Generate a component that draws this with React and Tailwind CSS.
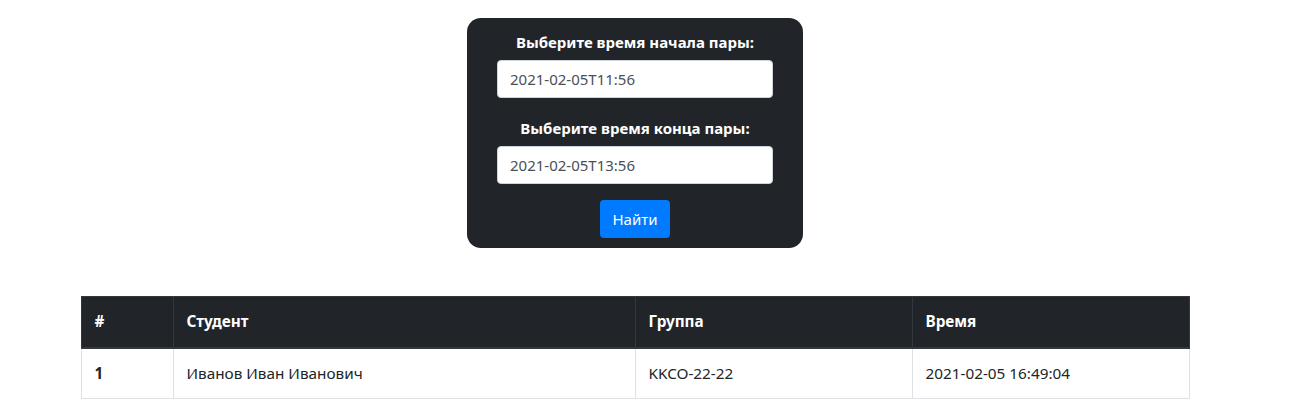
export default function App() {
  const font = { fontFamily: '"Noto Sans", "Open Sans", sans-serif' };
  return (
    <div className="w-[1270px] bg-white text-[#212529]" style={font}>
      <div className="flex justify-center pt-[18px]">
        <div className="w-[336px] h-[230px] rounded-[14px] bg-[#212529] flex flex-col items-center pt-[12px]">
          <div className="text-white font-bold text-[15px] leading-[24px] h-[30px]">Выберите время начала пары:</div>
          <div className="w-[276px] h-[38px] rounded-[4px] bg-white border border-[#ced4da] flex items-center px-[12px] text-[15px] text-[#495057]">2021-02-05T11:56</div>
          <div className="text-white font-bold text-[15px] leading-[24px] mt-[18px] h-[30px]">Выберите время конца пары:</div>
          <div className="w-[276px] h-[38px] rounded-[4px] bg-white border border-[#ced4da] flex items-center px-[12px] text-[15px] text-[#495057]">2021-02-05T13:56</div>
          <button className="mt-[16px] w-[70px] h-[38px] rounded-[4px] bg-[#007bff] text-white text-[15px]">Найти</button>
        </div>
      </div>
      <div className="flex justify-center mt-[48px] pb-[15px]">
        <table className="w-[1108px] border-collapse text-[15.3px] table-fixed">
          <colgroup>
            <col className="w-[92px]" />
            <col className="w-[462px]" />
            <col className="w-[277px]" />
            <col className="w-[277px]" />
          </colgroup>
          <thead>
            <tr className="bg-[#212529] text-white h-[51px]">
              <th className="text-left font-bold px-[13px] border border-[#32383e] border-b-2">#</th>
              <th className="text-left font-bold px-[13px] border border-[#32383e] border-b-2">Студент</th>
              <th className="text-left font-bold px-[13px] border border-[#32383e] border-b-2">Группа</th>
              <th className="text-left font-bold px-[13px] border border-[#32383e] border-b-2">Время</th>
            </tr>
          </thead>
          <tbody>
            <tr className="h-[51px]">
              <td className="font-bold px-[13px] border border-[#dee2e6]">1</td>
              <td className="px-[13px] border border-[#dee2e6]">Иванов Иван Иванович</td>
              <td className="px-[13px] border border-[#dee2e6]">KKCO-22-22</td>
              <td className="px-[13px] border border-[#dee2e6]">2021-02-05 16:49:04</td>
            </tr>
          </tbody>
        </table>
      </div>
    </div>
  );
}
